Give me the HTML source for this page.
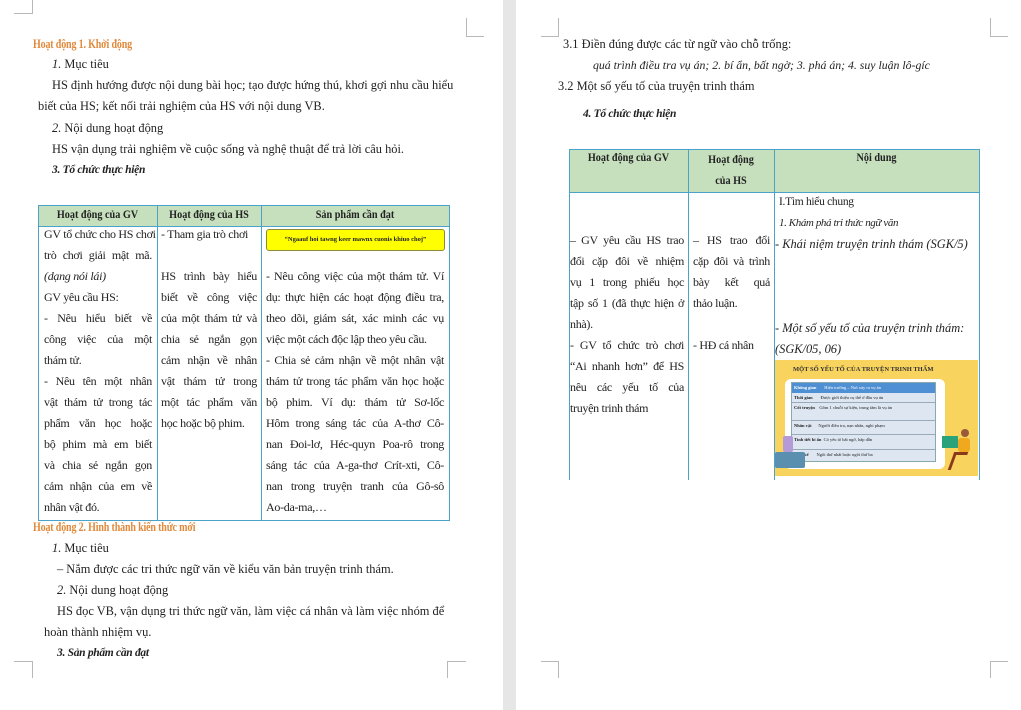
<!DOCTYPE html>
<html><head><meta charset="utf-8"><style>
*{margin:0;padding:0;box-sizing:border-box}
body{width:1021px;height:710px;background:#e6e6e6;position:relative;overflow:hidden;font-family:"Liberation Serif","DejaVu Serif",serif;color:#222;font-size:12.4px}
.pg{position:absolute;top:0;height:710px;background:#fff}
.t{position:absolute;white-space:nowrap;line-height:16px}
.o{color:#e0893a;font-weight:bold;font-size:12.5px;letter-spacing:-0.2px;transform:scaleX(.8);transform-origin:left}
.bi{font-weight:bold;font-style:italic}
.m{position:absolute;border-color:#b8b8b8;border-style:solid;border-width:0}
.cell{position:absolute;line-height:21px;font-size:12px;letter-spacing:-0.3px}
.cell div{height:21px;white-space:nowrap;text-align:justify;text-align-last:justify}
.cell div.l{text-align-last:left}
.hd{position:absolute;background:#c6dfbd}
.hh{font-weight:bold;font-size:12px;transform:scaleX(.85);transform-origin:center}
.vl{position:absolute;background:#4ba3c9;width:1px}
.hl{position:absolute;background:#4ba3c9;height:1px}
</style></head><body>
<div class="pg" style="left:0;width:503px"></div>
<div class="pg" style="left:516px;width:505px"></div>

<div class="m" style="left:14px;top:0;width:19px;height:14px;border-right-width:1px;border-bottom-width:1px"></div>
<div class="m" style="left:466px;top:18px;width:18px;height:19px;border-left-width:1px;border-bottom-width:1px"></div>
<div class="m" style="left:14px;top:661px;width:19px;height:17px;border-right-width:1px;border-top-width:1px"></div>
<div class="m" style="left:447px;top:661px;width:19px;height:17px;border-left-width:1px;border-top-width:1px"></div>
<div class="m" style="left:541px;top:18px;width:18px;height:19px;border-right-width:1px;border-bottom-width:1px"></div>
<div class="m" style="left:990px;top:18px;width:18px;height:19px;border-left-width:1px;border-bottom-width:1px"></div>
<div class="m" style="left:541px;top:661px;width:18px;height:17px;border-right-width:1px;border-top-width:1px"></div>
<div class="m" style="left:990px;top:661px;width:18px;height:17px;border-left-width:1px;border-top-width:1px"></div>

<!-- left page -->
<div class="t o" style="left:33px;top:36px">Hoạt động 1. Khởi động</div>
<div class="t" style="left:52px;top:56px"><i>1.</i> Mục tiêu</div>
<div class="t" style="left:52px;top:77px">HS định hướng được nội dung bài học; tạo được hứng thú, khơi gợi nhu cầu hiểu</div>
<div class="t" style="left:38px;top:98px">biết của HS; kết nối trải nghiệm của HS với nội dung VB.</div>
<div class="t" style="left:52px;top:120px"><i>2.</i> Nội dung hoạt động</div>
<div class="t" style="left:52px;top:141px">HS vận dụng trải nghiệm về cuộc sống và nghệ thuật để trả lời câu hỏi.</div>
<div class="t bi" style="left:52px;top:162px;font-size:11.5px;letter-spacing:-0.3px">3. Tổ chức thực hiện</div>

<div class="hd" style="left:38px;top:205px;width:411px;height:21px"></div>
<div class="t hh" style="left:38px;top:206px;width:119px;text-align:center">Hoạt động của GV</div>
<div class="t hh" style="left:157px;top:206px;width:104px;text-align:center">Hoạt động của HS</div>
<div class="t hh" style="left:261px;top:206px;width:188px;text-align:center">Sản phẩm cần đạt</div>
<div class="hl" style="left:38px;top:205px;width:412px"></div>
<div class="hl" style="left:38px;top:226px;width:412px"></div>
<div class="hl" style="left:38px;top:520px;width:412px"></div>
<div class="vl" style="left:38px;top:205px;height:316px"></div>
<div class="vl" style="left:157px;top:205px;height:316px"></div>
<div class="vl" style="left:261px;top:205px;height:316px"></div>
<div class="vl" style="left:449px;top:205px;height:316px"></div>

<div class="cell" style="left:44px;top:224px;width:108px">
<div>GV tổ chức cho HS chơi</div><div>trò chơi giải mật mã.</div><div class="l"><i>(dạng nói lái)</i></div><div class="l">GV yêu cầu HS:</div><div>- Nêu hiểu biết về</div><div>công việc của một</div><div class="l">thám tử.</div><div>- Nêu tên một nhân</div><div>vật thám tử trong tác</div><div>phẩm văn học hoặc</div><div>bộ phim mà em biết</div><div>và chia sẻ ngắn gọn</div><div>cảm nhận của em về</div><div class="l">nhân vật đó.</div>
</div>
<div class="cell" style="left:161px;top:224px;width:96px">
<div class="l">- Tham gia trò chơi</div><div></div><div>HS trình bày hiểu</div><div>biết về công việc</div><div>của một thám tử và</div><div>chia sẻ ngắn gọn</div><div>cảm nhận về nhân</div><div>vật thám tử trong</div><div>một tác phẩm văn</div><div class="l">học hoặc bộ phim.</div>
</div>
<div style="position:absolute;left:266px;top:229px;width:179px;height:22px;background:#ffff00;border:1px solid #8a8a3a;border-radius:3px;font-size:6.5px;font-weight:bold;text-align:center;line-height:20px;white-space:nowrap">“Ngaauf hoi tawng keer  mawnx cuonis khiuo choj”</div>
<div class="cell" style="left:266px;top:266px;width:178px">
<div>- Nêu công việc của một thám tử. Ví</div><div>dụ: thực hiện các hoạt động điều tra,</div><div>theo dõi, giám sát, xác minh các vụ</div><div class="l">việc một cách độc lập theo yêu cầu.</div><div>- Chia sẻ cảm nhận về một nhân vật</div><div>thám tử trong tác phẩm văn học hoặc</div><div>bộ phim. Ví dụ: thám tử Sơ-lốc</div><div>Hôm trong sáng tác của A-thơ Cô-</div><div>nan Đoi-lơ, Héc-quyn Poa-rô trong</div><div>sáng tác của A-ga-thơ Crít-xti, Cô-</div><div>nan trong truyện tranh của Gô-sô</div><div class="l">Ao-da-ma,…</div>
</div>

<div class="t o" style="left:33px;top:519px">Hoạt động 2. Hình thành kiến thức mới</div>
<div class="t" style="left:52px;top:540px"><i>1.</i> Mục tiêu</div>
<div class="t" style="left:57px;top:561px">– Nắm được các tri thức ngữ văn về kiểu văn bản truyện trinh thám.</div>
<div class="t" style="left:57px;top:582px"><i>2.</i> Nội dung hoạt động</div>
<div class="t" style="left:57px;top:603px">HS đọc VB, vận dụng tri thức ngữ văn, làm việc cá nhân và làm việc nhóm để</div>
<div class="t" style="left:44px;top:624px">hoàn thành nhiệm vụ.</div>
<div class="t bi" style="left:57px;top:645px;font-size:11.5px;letter-spacing:-0.3px">3. Sản phẩm cần đạt</div>

<!-- right page -->
<div class="t" style="left:563px;top:36px">3.1 Điền đúng được các từ ngữ vào chỗ trống:</div>
<div class="t" style="left:593px;top:57px;font-style:italic;font-size:11.8px">quá trình điều tra vụ án; 2. bí ẩn, bất ngờ; 3. phá án; 4. suy luận lô-gíc</div>
<div class="t" style="left:558px;top:78px">3.2 Một số yếu tố của truyện trinh thám</div>
<div class="t bi" style="left:583px;top:106px;font-size:11.5px;letter-spacing:-0.3px">4. Tổ chức thực hiện</div>

<div class="hd" style="left:569px;top:149px;width:410px;height:43px"></div>
<div class="t hh" style="left:569px;top:149px;width:119px;text-align:center">Hoạt động của GV</div>
<div class="t hh" style="left:688px;top:149px;width:86px;text-align:center;line-height:21px;white-space:normal">Hoạt động<br>của HS</div>
<div class="t hh" style="left:774px;top:149px;width:205px;text-align:center">Nội dung</div>
<div class="hl" style="left:569px;top:149px;width:411px"></div>
<div class="hl" style="left:569px;top:192px;width:411px"></div>
<div class="vl" style="left:569px;top:149px;height:331px"></div>
<div class="vl" style="left:688px;top:149px;height:331px"></div>
<div class="vl" style="left:774px;top:149px;height:331px"></div>
<div class="vl" style="left:979px;top:149px;height:331px"></div>

<div class="cell" style="left:570px;top:230px;width:114px">
<div>– GV yêu cầu HS trao</div><div>đổi cặp đôi về nhiệm</div><div>vụ 1 trong phiếu học</div><div>tập số 1 (đã thực hiện ở</div><div class="l">nhà).</div><div>- GV tổ chức trò chơi</div><div>“Ai nhanh hơn” để HS</div><div>nêu các yếu tố của</div><div class="l">truyện trinh thám</div>
</div>
<div class="cell" style="left:693px;top:230px;width:77px">
<div>– HS trao đổi</div><div>cặp đôi và trình</div><div>bày kết quả</div><div class="l">thảo luận.</div><div></div><div class="l">- HĐ cá nhân</div>
</div>
<div class="t" style="left:779px;top:192px;line-height:21px;font-size:11.5px;letter-spacing:-0.3px">I.Tìm hiểu chung</div>
<div class="t" style="left:779px;top:213px;line-height:21px;font-style:italic;font-size:11px;letter-spacing:-0.4px">1. Khám phá tri thức ngữ văn</div>
<div class="t" style="left:775px;top:234px;line-height:21px;font-style:italic">- Khái niệm truyện trinh thám (SGK/5)</div>
<div class="t" style="left:775px;top:318px;line-height:21px;font-style:italic">- Một số yếu tố của truyện trinh thám:</div>
<div class="t" style="left:775px;top:339px;line-height:21px;font-style:italic">(SGK/05, 06)</div>

<div style="position:absolute;left:775px;top:360px;width:203px;height:116px;background:#f8d35e">
 <div style="position:absolute;left:18px;top:6px;font-size:6.5px;font-weight:bold;color:#333;white-space:nowrap">MỘT SỐ YẾU TỐ CỦA TRUYỆN TRINH THẨM</div>
 <div style="position:absolute;left:10px;top:19px;width:160px;height:90px;background:#fff;border-radius:6px"></div>
 <div style="position:absolute;left:16px;top:22px;width:145px;height:80px;background:#dde6f1;border:1px solid #8aa;font-size:4.5px;line-height:1.2">
  <div style="height:10px;background:#4f8fd3;color:#fff;padding:2px"><b>Không gian</b>&nbsp;&nbsp;&nbsp;&nbsp;&nbsp;&nbsp;&nbsp;Hiện trường – Nơi xảy ra vụ án</div>
  <div style="height:10px;border-bottom:1px solid #9ab;padding:2px"><b>Thời gian</b>&nbsp;&nbsp;&nbsp;&nbsp;&nbsp;&nbsp;&nbsp;Được giới thiệu cụ thể ở đầu vụ án</div>
  <div style="height:18px;border-bottom:1px solid #9ab;padding:2px"><b>Cốt truyện</b>&nbsp;&nbsp;&nbsp;&nbsp;Gồm 1 chuỗi sự kiện, trung tâm là vụ án</div>
  <div style="height:14px;border-bottom:1px solid #9ab;padding:2px"><b>Nhân vật</b>&nbsp;&nbsp;&nbsp;&nbsp;&nbsp;&nbsp;Người điều tra, nạn nhân, nghi phạm</div>
  <div style="height:15px;border-bottom:1px solid #9ab;padding:2px"><b>Tình tiết bí ẩn</b>&nbsp;&nbsp;Có yếu tố bất ngờ, hấp dẫn</div>
  <div style="padding:2px"><b>Ngôi kể</b>&nbsp;&nbsp;&nbsp;&nbsp;&nbsp;&nbsp;&nbsp;Ngôi thứ nhất hoặc ngôi thứ ba</div>
 </div>
 <div style="position:absolute;left:0;top:92px;width:30px;height:16px;background:#5a8fb0;border-radius:2px"></div>
 <div style="position:absolute;left:8px;top:76px;width:10px;height:16px;background:#b59ad8;border-radius:2px"></div>
 <div style="position:absolute;left:167px;top:76px;width:16px;height:12px;background:#2aa37a"></div>
 <div style="position:absolute;left:186px;top:69px;width:8px;height:8px;background:#9a5a3a;border-radius:50%"></div>
 <div style="position:absolute;left:183px;top:78px;width:12px;height:14px;background:#f0a81e;border-radius:3px"></div>
 <div style="position:absolute;left:176px;top:92px;width:14px;height:18px;border-left:3px solid #8a3a1a;border-top:3px solid #8a3a1a;transform:skewX(-20deg)"></div>
</div>
</body></html>
